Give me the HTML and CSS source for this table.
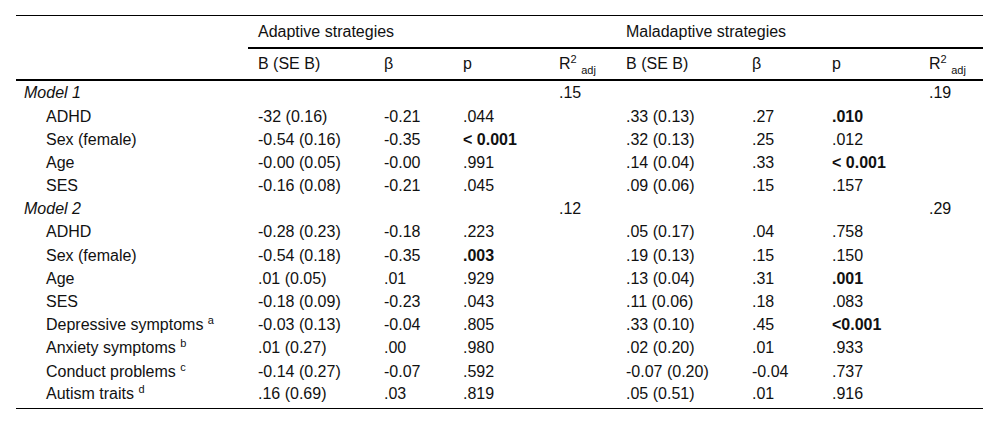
FILE: index.html
```html
<!DOCTYPE html>
<html>
<head>
<meta charset="utf-8">
<link rel="stylesheet" href="styles.css">
</head>
<body>
<div class="wrap">
<table class="tbl">
  <colgroup>
    <col class="c-label"><col class="c-b"><col class="c-beta"><col class="c-p"><col class="c-r1">
    <col class="c-b"><col class="c-beta2"><col class="c-p2"><col class="c-r2">
  </colgroup>
  <thead>
    <tr class="group-row">
      <th class="label"></th>
      <th class="group" colspan="4">Adaptive strategies</th>
      <th class="group" colspan="4">Maladaptive strategies</th>
    </tr>
    <tr class="head-row">
      <th class="label"></th>
      <th>B (SE B)</th><th>β</th><th>p</th><th>R<sup>2</sup> <sub>adj</sub></th>
      <th>B (SE B)</th><th>β</th><th>p</th><th>R<sup>2</sup> <sub>adj</sub></th>
    </tr>
  </thead>
  <tbody>
    <tr><td class="label model">Model 1</td><td></td><td></td><td></td><td>.15</td><td></td><td></td><td></td><td>.19</td></tr>
    <tr><td class="label item">ADHD</td><td>-32 (0.16)</td><td>-0.21</td><td>.044</td><td></td><td>.33 (0.13)</td><td>.27</td><td><b>.010</b></td><td></td></tr>
    <tr><td class="label item">Sex (female)</td><td>-0.54 (0.16)</td><td>-0.35</td><td><b>&lt; 0.001</b></td><td></td><td>.32 (0.13)</td><td>.25</td><td>.012</td><td></td></tr>
    <tr><td class="label item">Age</td><td>-0.00 (0.05)</td><td>-0.00</td><td>.991</td><td></td><td>.14 (0.04)</td><td>.33</td><td><b>&lt; 0.001</b></td><td></td></tr>
    <tr><td class="label item">SES</td><td>-0.16 (0.08)</td><td>-0.21</td><td>.045</td><td></td><td>.09 (0.06)</td><td>.15</td><td>.157</td><td></td></tr>
    <tr><td class="label model">Model 2</td><td></td><td></td><td></td><td>.12</td><td></td><td></td><td></td><td>.29</td></tr>
    <tr><td class="label item">ADHD</td><td>-0.28 (0.23)</td><td>-0.18</td><td>.223</td><td></td><td>.05 (0.17)</td><td>.04</td><td>.758</td><td></td></tr>
    <tr><td class="label item">Sex (female)</td><td>-0.54 (0.18)</td><td>-0.35</td><td><b>.003</b></td><td></td><td>.19 (0.13)</td><td>.15</td><td>.150</td><td></td></tr>
    <tr><td class="label item">Age</td><td>.01 (0.05)</td><td>.01</td><td>.929</td><td></td><td>.13 (0.04)</td><td>.31</td><td><b>.001</b></td><td></td></tr>
    <tr><td class="label item">SES</td><td>-0.18 (0.09)</td><td>-0.23</td><td>.043</td><td></td><td>.11 (0.06)</td><td>.18</td><td>.083</td><td></td></tr>
    <tr><td class="label item">Depressive symptoms <sup>a</sup></td><td>-0.03 (0.13)</td><td>-0.04</td><td>.805</td><td></td><td>.33 (0.10)</td><td>.45</td><td><b>&lt;0.001</b></td><td></td></tr>
    <tr><td class="label item">Anxiety symptoms <sup>b</sup></td><td>.01 (0.27)</td><td>.00</td><td>.980</td><td></td><td>.02 (0.20)</td><td>.01</td><td>.933</td><td></td></tr>
    <tr><td class="label item">Conduct problems <sup>c</sup></td><td>-0.14 (0.27)</td><td>-0.07</td><td>.592</td><td></td><td>-0.07 (0.20)</td><td>-0.04</td><td>.737</td><td></td></tr>
    <tr class="last"><td class="label item">Autism traits <sup>d</sup></td><td>.16 (0.69)</td><td>.03</td><td>.819</td><td></td><td>.05 (0.51)</td><td>.01</td><td>.916</td><td></td></tr>
  </tbody>
</table>
</div>
</body>
</html>
```

FILE: styles.css
```css
html, body {
  margin: 0;
  padding: 0;
  background: #ffffff;
}

.wrap {
  padding: 15px 0 0 16px;
}

.tbl {
  border-collapse: collapse;
  table-layout: fixed;
  width: 967px;
  font-family: "Liberation Sans", Arial, sans-serif;
  font-size: 16px;
  color: #111;
  border-top: 1px solid #000;
  border-bottom: 1px solid #000;
}

.c-label { width: 232px; }
.c-b { width: 126px; }
.c-beta { width: 79px; }
.c-p { width: 96px; }
.c-r1 { width: 67px; }
.c-beta2 { width: 80px; }
.c-p2 { width: 97px; }
.c-r2 { width: 64px; }

.tbl th,
.tbl td {
  text-align: left;
  font-weight: normal;
  padding: 0 0 0 10px;
  white-space: nowrap;
  vertical-align: middle;
  line-height: 18px;
}

.tbl .label {
  padding-left: 8px;
}

.tbl .item {
  padding-left: 30px;
}

.tbl .model {
  font-style: italic;
}

.group-row th {
  height: 31px;
}

.group-row .group {
  border-bottom: 2px solid #000;
}

.head-row th {
  height: 30px;
  border-bottom: 2px solid #000;
}

.tbl tbody td {
  height: 21.7px;
  padding-top: 1.5px;
}

.tbl tbody tr.last td {
  height: 22.9px;
  vertical-align: top;
  padding-top: 2.5px;
}

.tbl sup {
  font-size: 11px;
  vertical-align: 6px;
  line-height: 0;
}

.tbl sub {
  font-size: 11px;
  vertical-align: -5px;
  line-height: 0;
}

.tbl b {
  font-weight: bold;
}
```
